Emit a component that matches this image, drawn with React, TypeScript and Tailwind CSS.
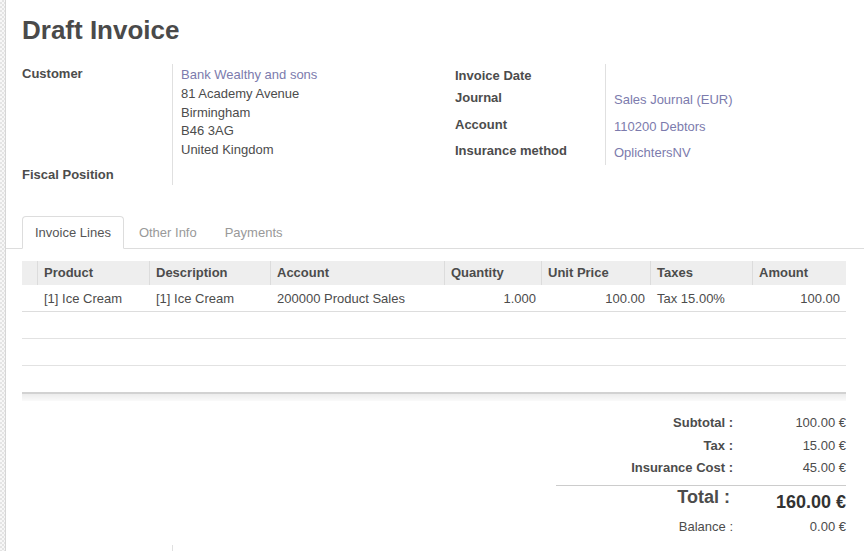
const cols = 'grid grid-cols-[15px_112px_121px_174px_97px_109px_102px_94px]';

const headers = ['Product', 'Description', 'Account', 'Quantity', 'Unit Price', 'Taxes', 'Amount'];

const line = {
  product: '[1] Ice Cream',
  description: '[1] Ice Cream',
  account: '200000 Product Sales',
  quantity: '1.000',
  price: '100.00',
  taxes: 'Tax 15.00%',
  amount: '100.00',
};

const rightFields = [
  { label: 'Invoice Date', value: '', h: 'h-[22px]' },
  { label: 'Journal', value: 'Sales Journal (EUR)', h: 'h-[27px]' },
  { label: 'Account', value: '110200 Debtors', h: 'h-[26px]' },
  { label: 'Insurance method', value: 'OplichtersNV', h: 'h-[26px]' },
];

const totals = [
  { label: 'Subtotal :', value: '100.00 €' },
  { label: 'Tax :', value: '15.00 €' },
  { label: 'Insurance Cost :', value: '45.00 €' },
];

export default function App() {
  return (
    <div className="flex h-[551px] w-[864px] overflow-hidden bg-white font-['Liberation_Sans',Arial,sans-serif] text-[13px] text-[#4c4c4c]">
      <div className="w-[6px] shrink-0 border-r border-[#d6d6d6] bg-[repeating-conic-gradient(#e4e4e4_0%_25%,#f7f7f7_0%_50%)] bg-[length:4px_4px]" />
      <div className="flex-1">
        {/* title */}
        <div className="pl-[16px] pt-[14px]">
          <h1 className="text-[26px] font-bold leading-[32px] text-[#4a4a4a]">Draft Invoice</h1>
        </div>

        {/* header fields */}
        <div className="mt-[18px] flex items-start pl-[16px]">
          <div className="grid w-[433px] grid-cols-[150px_1fr] leading-[19px]">
            <div className="h-[100px] font-bold">Customer</div>
            <div className="border-l border-[#e0e0e0] pl-[8px] pt-[2px] leading-[18.75px]">
              <div className="text-[#7c7bad]">Bank Wealthy and sons</div>
              <div>81 Academy Avenue</div>
              <div>Birmingham</div>
              <div>B46 3AG</div>
              <div>United Kingdom</div>
            </div>
            <div className="h-[21px] pt-px font-bold">Fiscal Position</div>
            <div className="border-l border-[#e0e0e0]" />
          </div>
          <div className="grid w-[391px] grid-cols-[150px_1fr] leading-[19px]">
            {rightFields.map((f) => (
              <div key={f.label} className="contents">
                <div className={`${f.h} pt-[2px] font-bold`}>{f.label}</div>
                <div className={`${f.h} border-l border-[#e0e0e0] pl-[8px] pt-[4px] text-[#7c7bad]`}>{f.value}</div>
              </div>
            ))}
          </div>
        </div>

        {/* tabs */}
        <div className="mt-[31px] flex border-b border-[#dddddd] pl-[16px]">
          <div className="-mb-px mr-[2px] rounded-t-[4px] border border-[#dddddd] border-b-white bg-white px-[12px] pb-[4px] pt-[6px] leading-[20px] text-[#555555]">
            Invoice Lines
          </div>
          <div className="mr-[2px] border border-transparent px-[12px] pb-[4px] pt-[6px] leading-[20px] text-[#999999]">
            Other Info
          </div>
          <div className="border border-transparent px-[12px] pb-[4px] pt-[6px] leading-[20px] text-[#999999]">
            Payments
          </div>
        </div>

        {/* lines table */}
        <div className="mt-[12px] w-[824px] pl-[16px] box-content">
          <div className={`${cols} h-[24px] items-center bg-[#eeeeee] font-bold`}>
            <div className="h-full" />
            {headers.map((h) => (
              <div key={h} className="flex h-full items-center border-l border-[#dcdcdc] px-[6px]">
                {h}
              </div>
            ))}
          </div>
          <div className={`${cols} h-[27px] items-center border-b border-[#dddddd] pt-px`}>
            <div />
            <div className="px-[7px]">{line.product}</div>
            <div className="px-[7px]">{line.description}</div>
            <div className="px-[7px]">{line.account}</div>
            <div className="pr-[5px] text-right">{line.quantity}</div>
            <div className="pr-[5px] text-right">{line.price}</div>
            <div className="px-[7px]">{line.taxes}</div>
            <div className="pr-[6px] text-right">{line.amount}</div>
          </div>
          <div className="h-[27px] border-b border-[#e2e2e2]" />
          <div className="h-[27px] border-b border-[#e2e2e2]" />
          <div className="h-[26px]" />
          <div className="h-[9px] border-t-2 border-[#d2d2d2] bg-gradient-to-b from-[#ececec] to-[#fafafa]" />
        </div>

        {/* totals */}
        <div className="w-[840px]">
          <div className="ml-auto mt-[11px] w-[290px]">
            <div className="grid grid-cols-[1fr_113px] leading-[22.5px]">
              {totals.map((t) => (
                <div key={t.label} className="contents">
                  <div className="text-right font-bold">{t.label}</div>
                  <div className="text-right">{t.value}</div>
                </div>
              ))}
            </div>
            <div className="mt-[5px] grid grid-cols-[1fr_113px] border-t border-[#cccccc]">
              <div className="pr-[3px] text-right text-[18px] font-bold leading-[22px]">Total :</div>
              <div className="pt-[5px] text-right text-[18px] font-bold leading-[22px] text-[#333333]">160.00 €</div>
            </div>
            <div className="mt-[3px] grid grid-cols-[1fr_113px] leading-[22px]">
              <div className="text-right">Balance :</div>
              <div className="text-right">0.00 €</div>
            </div>
          </div>
        </div>

        <div className="mt-[7px] grid grid-cols-[150px_1fr] pl-[16px]">
          <div />
          <div className="h-[20px] border-l border-[#e0e0e0]" />
        </div>
      </div>
    </div>
  );
}
